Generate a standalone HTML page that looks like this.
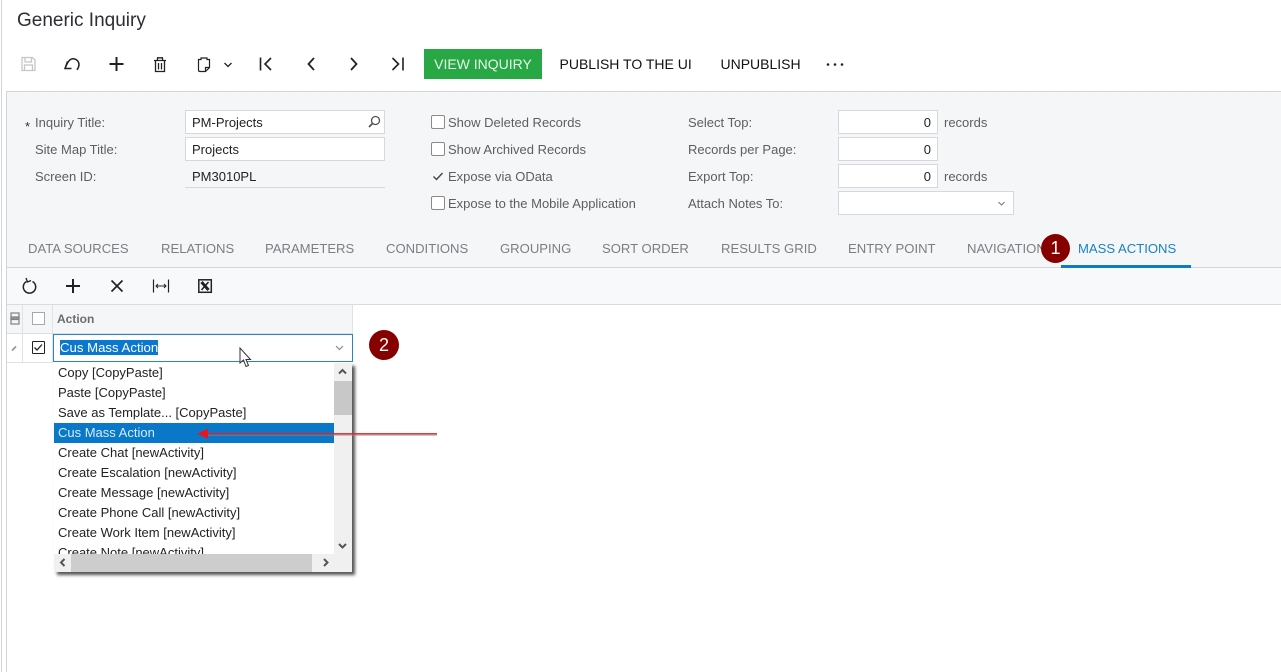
<!DOCTYPE html>
<html><head><meta charset="utf-8"><style>
*{box-sizing:border-box}
html,body{margin:0;padding:0}
body{width:1281px;height:672px;overflow:hidden;background:#fff;position:relative;font-family:"Liberation Sans",sans-serif;font-size:13px;color:#222}
.a{position:absolute;white-space:nowrap}
.l{position:absolute;white-space:nowrap;color:#5e5e5e;line-height:16px;font-size:13px}
.i{position:absolute;background:#fff;border:1px solid #d5d8dc;height:24px;line-height:24px;padding-left:6px;color:#222;font-size:13px}
.cb{position:absolute;width:14px;height:14px;border:1px solid #8a8a8a;border-radius:2px;background:#fff}
.t{position:absolute;top:241px;line-height:16px;color:#7b7f83;font-size:13.1px;white-space:nowrap}
svg{position:absolute;overflow:visible}
.tb{position:absolute;white-space:nowrap;line-height:16px;font-size:14px;color:#111;top:56px}
</style></head><body>

<div class="a" style="left:1px;top:0;width:1px;height:672px;background:#d5d5d5"></div>
<div class="a" style="left:17px;top:9px;font-size:19px;line-height:24px;color:#2b2f33">Generic Inquiry</div>

<!-- toolbar icons -->
<svg style="left:0;top:0" width="430" height="90" fill="none" stroke="#222" stroke-width="1.400">
<path d="M22 57.500h10.500l2.500 2.500v10.500H22z M25 57.500v4.500h6.500v-4.500 M24.500 70.500v-5.500h8v5.500" stroke="#c4c6c8" stroke-width="1.300"/>
<path d="M67.500 61.500l-2.500 7 6.500 0 M65.500 67.500C67.500 62 70 58.800 73 58.800 76.500 58.800 79 61.500 79 64.500 79 66.500 78 68.500 77 69.800" stroke-width="1.500"/>
<path d="M109.500 64h14 M116.500 57v14" stroke-width="2"/>
<path d="M154 60.500h12 M157.500 60v-2.200h5V60 M155.500 60.500v11h9v-11 M158.500 63v6.500 M161.500 63v6.500" stroke-width="1.300"/>
<path d="M201 59.500V58H207V59.500H209.500V67.500L205.500 71.500H200Q198.500 71.500 198.500 70V59.500Z M205.500 71v-3.500h4" stroke-width="1.200"/>
<path d="M224.500 63l3.500 3.500 3.500-3.500" stroke-width="1.300"/>
<path d="M260.500 57.500v13 M271 58l-6 6 6 6" stroke-width="1.600"/>
<path d="M314 58l-5.500 6 5.500 6" stroke-width="1.800"/>
<path d="M351 58l5.500 6-5.500 6" stroke-width="1.800"/>
<path d="M403 57.500v13 M392.500 58l6 6-6 6" stroke-width="1.600"/>
</svg>

<div class="a" style="left:424px;top:49px;width:118px;height:30px;background:#28a745;color:#e6f5ea;font-size:14px;line-height:30px;text-align:center">VIEW INQUIRY</div>
<div class="tb" style="left:559.500px">PUBLISH TO THE UI</div>
<div class="tb" style="left:720.500px">UNPUBLISH</div>
<svg style="left:0;top:0" width="900" height="90" fill="#222"><circle cx="828" cy="64.500" r="1.300"/><circle cx="835" cy="64.500" r="1.300"/><circle cx="842" cy="64.500" r="1.300"/></svg>

<!-- form panel -->
<div class="a" style="left:6px;top:91px;width:1275px;height:177px;background:#f4f6f8;border-top:1px solid #d3d5d8;border-left:1px solid #d3d5d8;border-bottom:1px solid #d3d5d8"></div>
<div class="a" style="left:7px;top:268px;width:1274px;height:36px;background:#f8f9fa"></div>
<div class="a" style="left:6px;top:268px;width:1px;height:404px;background:#d3d5d8"></div>

<div class="a" style="left:25px;top:119px;font-size:13px;line-height:16px;color:#333">*</div>
<div class="l" style="left:35px;top:115px">Inquiry Title:</div>
<div class="l" style="left:35px;top:142px">Site Map Title:</div>
<div class="l" style="left:35px;top:169px">Screen ID:</div>
<div class="i" style="left:185px;top:110px;width:200px">PM-Projects</div>
<svg style="left:0;top:0" width="400" height="140" fill="none" stroke="#555" stroke-width="1.300"><circle cx="375.500" cy="120.500" r="4"/><path d="M372.500 123.500l-3.500 3.500" stroke-width="1.800"/></svg>
<div class="i" style="left:185px;top:137px;width:200px">Projects</div>
<div class="a" style="left:192px;top:169px;line-height:16px">PM3010PL</div>
<div class="a" style="left:185px;top:187px;width:200px;height:1px;background:#d5d8dc"></div>

<div class="cb" style="left:431px;top:115px"></div>
<div class="cb" style="left:431px;top:142px"></div>
<div class="cb" style="left:431px;top:196px"></div>
<svg style="left:0;top:0" width="460" height="190" fill="none" stroke="#444" stroke-width="1.400"><path d="M433.500 176.500l3 3 6-6.500"/></svg>
<div class="l" style="left:448px;top:115px">Show Deleted Records</div>
<div class="l" style="left:448px;top:142px">Show Archived Records</div>
<div class="l" style="left:448px;top:169px">Expose via OData</div>
<div class="l" style="left:448px;top:196px">Expose to the Mobile Application</div>

<div class="l" style="left:688px;top:115px">Select Top:</div>
<div class="l" style="left:688px;top:142px">Records per Page:</div>
<div class="l" style="left:688px;top:169px">Export Top:</div>
<div class="l" style="left:688px;top:196px">Attach Notes To:</div>
<div class="i" style="left:838px;top:110px;width:100px;text-align:right;padding-right:6px">0</div>
<div class="i" style="left:838px;top:137px;width:100px;text-align:right;padding-right:6px">0</div>
<div class="i" style="left:838px;top:164px;width:100px;text-align:right;padding-right:6px">0</div>
<div class="i" style="left:838px;top:191px;width:176px"></div>
<div class="l" style="left:944px;top:115px">records</div>
<div class="l" style="left:944px;top:169px">records</div>
<svg style="left:0;top:0" width="1020" height="220" fill="none" stroke="#777" stroke-width="1"><path d="M998.500 202l3 3 3-3"/></svg>

<!-- tabs -->
<div class="t" style="left:28px">DATA SOURCES</div>
<div class="t" style="left:161px">RELATIONS</div>
<div class="t" style="left:265px">PARAMETERS</div>
<div class="t" style="left:386px">CONDITIONS</div>
<div class="t" style="left:500px">GROUPING</div>
<div class="t" style="left:602px">SORT ORDER</div>
<div class="t" style="left:721px">RESULTS GRID</div>
<div class="t" style="left:848px">ENTRY POINT</div>
<div class="t" style="left:967px">NAVIGATION</div>
<div class="t" style="left:1078px;color:#1a82c4">MASS ACTIONS</div>
<div class="a" style="left:1061px;top:265px;width:130px;height:3px;background:#0d7cc1"></div>
<div class="a" style="left:1041px;top:234px;width:29px;height:29px;border-radius:50%;background:#870000;color:#fff;font-size:18px;line-height:29px;text-align:center">1</div>

<!-- grid toolbar -->
<svg style="left:0;top:0" width="240" height="310" fill="none" stroke="#222" stroke-width="1.500">
<path d="M26.500 281.500a6.200 6.200 0 1 0 6 0"/><path d="M26 278l1.500 4 3.500-1.500" stroke-width="1.300"/>
<path d="M66 286h14 M73 279v14" stroke-width="2"/>
<path d="M111.500 280.500l11 11 M122.500 280.500l-11 11" stroke-width="1.700"/>
<path d="M153.500 279.500v13 M168.500 279.500v13" stroke-width="1.200"/><path d="M156 286h10 M158 284l-2 2 2 2 M164 284l2 2-2 2" stroke-width="1"/>
<rect x="198.800" y="279.800" width="12.500" height="12.500" stroke-width="1.500"/><path d="M201.500 282l7 8" stroke-width="3"/><path d="M208.500 282l-7 8" stroke-width="1.600"/>
</svg>
<div class="a" style="left:7px;top:304px;width:1274px;height:1px;background:#d9dbde"></div>

<!-- grid -->
<div class="a" style="left:7px;top:305px;width:346px;height:29px;background:#f4f6f8;border-bottom:1px solid #dcdee0"></div>
<div class="a" style="left:22px;top:305px;width:1px;height:58px;background:#e0e2e4"></div>
<div class="a" style="left:52px;top:305px;width:1px;height:58px;background:#e0e2e4"></div>
<div class="a" style="left:352px;top:305px;width:1px;height:29px;background:#e0e2e4"></div>
<div class="a" style="left:7px;top:362px;width:46px;height:1px;background:#e0e2e4"></div>
<svg style="left:0;top:0" width="60" height="360" fill="none" stroke="#808080" stroke-width="1.200">
<rect x="11" y="313" width="8" height="4"/><rect x="11" y="319.500" width="8" height="4.500"/><path d="M10 318.200h10"/>
<path d="M12 350.500l4-4" stroke="#999" stroke-width="1.800"/>
</svg>
<div class="a" style="left:32px;top:312px;width:13px;height:13px;border:1px solid #a6a8aa;background:#fff"></div>
<div class="a" style="left:32px;top:341px;width:13px;height:13px;border:1px solid #222;background:#fff;border-radius:1px"></div>
<svg style="left:0;top:0" width="60" height="360" fill="none" stroke="#222" stroke-width="1.300"><path d="M34.500 347.500l2.500 2.500 5-5.500"/></svg>
<div class="a" style="left:57px;top:312px;font-weight:bold;font-size:12px;line-height:15px;color:#6a6e72">Action</div>

<div class="a" style="left:53px;top:334px;width:300px;height:28px;border:1px solid #2a86bf;background:#fff"></div>
<div class="a" style="left:60px;top:340px;height:15px;line-height:15px;background:#0a78d0;color:#fff;font-size:13.200px">Cus Mass Action</div>
<svg style="left:0;top:0" width="360" height="370" fill="none" stroke="#8a8a8a" stroke-width="1.200"><path d="M336 346l3.500 3.500 3.500-3.500"/></svg>

<!-- dropdown -->
<div class="a" style="left:54px;top:363px;width:298px;height:209px;background:#fff;box-shadow:3px 3px 3px #555;overflow:hidden">
 <div class="a" style="left:0;top:60px;width:280px;height:20px;background:#0a78c8"></div>
 <div class="a" style="left:4px;top:0;line-height:20px;white-space:nowrap;font-size:13px;color:#222;height:191px;overflow:hidden">
 Copy [CopyPaste]<br>Paste [CopyPaste]<br>Save as Template... [CopyPaste]<br><span style="color:#d6ecf8">Cus Mass Action</span><br>Create Chat [newActivity]<br>Create Escalation [newActivity]<br>Create Message [newActivity]<br>Create Phone Call [newActivity]<br>Create Work Item [newActivity]<br>Create Note [newActivity]
 </div>
 <div class="a" style="left:280px;top:0;width:18px;height:191px;background:#f0f0f0"></div>
 <div class="a" style="left:280px;top:18px;width:18px;height:34px;background:#c8c8c8"></div>
 <div class="a" style="left:0;top:191px;width:298px;height:18px;background:#f0f0f0"></div>
 <div class="a" style="left:17px;top:191px;width:241px;height:18px;background:#cdcdcd"></div>
</div>
<svg style="left:0;top:0" width="360" height="580" fill="none" stroke="#555" stroke-width="2">
<path d="M339 373.500l3.500-3.500 3.500 3.500"/><path d="M339 544l3.500 3.500 3.500-3.500"/>
<path d="M64.500 559l-3.500 3.500 3.500 3.500"/><path d="M324 559l3.500 3.500-3.500 3.500"/>
</svg>

<!-- circle 2 -->
<div class="a" style="left:369px;top:330px;width:30px;height:30px;border-radius:50%;background:#870000;color:#fff;font-size:18px;line-height:30px;text-align:center">2</div>

<!-- cursor -->
<svg style="left:0;top:0" width="260" height="370"><path d="M240 348v15l3.500-3 2.500 6.500 2.500-1-2.500-6h4.500z" fill="#fff" stroke="#333" stroke-width="1"/></svg>

<!-- arrow -->
<svg style="left:0;top:0" width="450" height="450" fill="none">
<path d="M205 435.200L437 435.200" stroke="#8a8a8a" stroke-opacity=".45" stroke-width="1.500"/>
<path d="M205 433.800L437 433.800" stroke="#ea1c24" stroke-width="1.300"/>
<path d="M197 433.800l11-5v10z" fill="#e8141e"/>
</svg>
</body></html>
